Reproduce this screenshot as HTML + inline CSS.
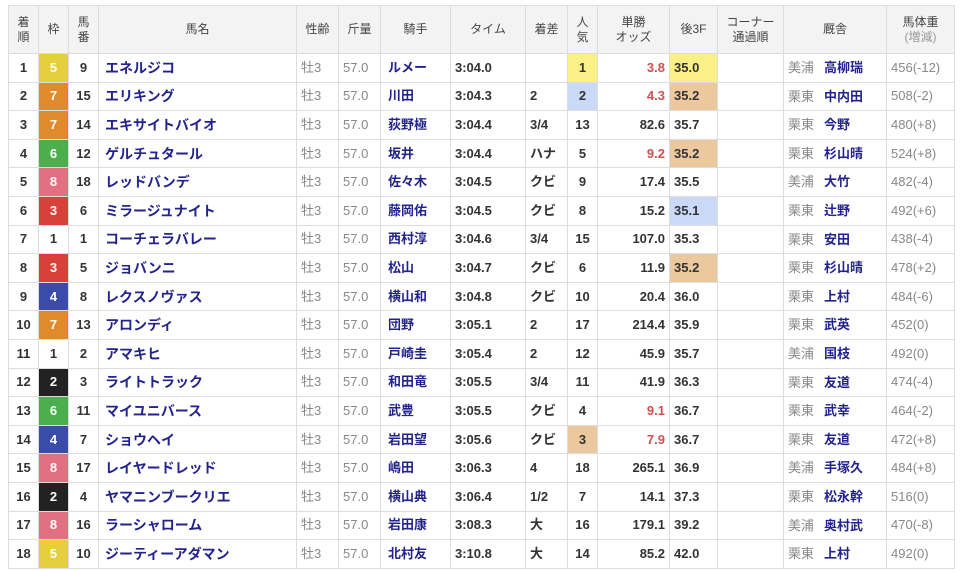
<!DOCTYPE html>
<html><head><meta charset="utf-8"><style>
body{margin:0;background:#fff;font-family:"Liberation Sans","Noto Sans CJK JP",sans-serif;}
table{position:absolute;left:8px;top:5px;border-collapse:collapse;table-layout:fixed;width:946px;font-size:13px;color:#333;}
td,th{border:1px solid #ddd;padding:0 4px;white-space:nowrap;overflow:hidden;vertical-align:middle;line-height:16px;}
th{background:#f3f3f3;font-weight:normal;font-size:12px;color:#444;height:47px;line-height:15px;text-align:center}
td{height:27.6px;}
td span{display:inline-block;vertical-align:middle;line-height:16px}
.c{text-align:center}.b{font-weight:bold}.r{text-align:right}
.n{color:#23238e;font-weight:bold;font-size:14px;padding-left:6px}
.j{color:#23238e;font-weight:bold;padding-left:7px}
.g{color:#888}
.o{color:#d05050}
.w{color:#fff;font-weight:bold;text-align:center}
.w1{background:#fff;color:#333}.w2{background:#222}.w3{background:#d8403a}.w4{background:#3b4ca8}.w5{background:#e5cf3c}.w6{background:#4cae4c}.w7{background:#e08a2b}.w8{background:#e07082}
.p1{background:#fbef88}.p2{background:#c9d9f7}.p3{background:#ecc89e}
th .s{color:#999;font-size:12px}
.k{color:#23238e;font-weight:bold;margin-left:10px}
</style></head><body>
<table>
<colgroup><col style="width:30px"><col style="width:30px"><col style="width:30px"><col style="width:198px"><col style="width:42px"><col style="width:42px"><col style="width:70px"><col style="width:75px"><col style="width:42px"><col style="width:30px"><col style="width:72px"><col style="width:48px"><col style="width:66px"><col style="width:103px"><col style="width:68px"></colgroup>
<tr><th>着<br>順</th><th>枠</th><th>馬<br>番</th><th>馬名</th><th>性齢</th><th>斤量</th><th>騎手</th><th>タイム</th><th>着差</th><th>人<br>気</th><th>単勝<br>オッズ</th><th>後3F</th><th>コーナー<br>通過順</th><th>厩舎</th><th>馬体重<br><span class="s">(増減)</span></th></tr>
<tr><td class="c b">1</td><td class="w w5">5</td><td class="c b">9</td><td class="n">エネルジコ</td><td class="g">牡3</td><td class="g">57.0</td><td class="j">ルメー</td><td class="b">3:04.0</td><td class="b"></td><td class="c b p1">1</td><td class="r b o">3.8</td><td class="b p1">35.0</td><td></td><td><span class="g">美浦</span><span class="k">高柳瑞</span></td><td class="g">456(-12)</td></tr>
<tr><td class="c b">2</td><td class="w w7">7</td><td class="c b">15</td><td class="n">エリキング</td><td class="g">牡3</td><td class="g">57.0</td><td class="j">川田</td><td class="b">3:04.3</td><td class="b">2</td><td class="c b p2">2</td><td class="r b o">4.3</td><td class="b p3">35.2</td><td></td><td><span class="g">栗東</span><span class="k">中内田</span></td><td class="g">508(-2)</td></tr>
<tr><td class="c b">3</td><td class="w w7">7</td><td class="c b">14</td><td class="n">エキサイトバイオ</td><td class="g">牡3</td><td class="g">57.0</td><td class="j">荻野極</td><td class="b">3:04.4</td><td class="b">3/4</td><td class="c b">13</td><td class="r b">82.6</td><td class="b">35.7</td><td></td><td><span class="g">栗東</span><span class="k">今野</span></td><td class="g">480(+8)</td></tr>
<tr><td class="c b">4</td><td class="w w6">6</td><td class="c b">12</td><td class="n">ゲルチュタール</td><td class="g">牡3</td><td class="g">57.0</td><td class="j">坂井</td><td class="b">3:04.4</td><td class="b">ハナ</td><td class="c b">5</td><td class="r b o">9.2</td><td class="b p3">35.2</td><td></td><td><span class="g">栗東</span><span class="k">杉山晴</span></td><td class="g">524(+8)</td></tr>
<tr><td class="c b">5</td><td class="w w8">8</td><td class="c b">18</td><td class="n">レッドバンデ</td><td class="g">牡3</td><td class="g">57.0</td><td class="j">佐々木</td><td class="b">3:04.5</td><td class="b">クビ</td><td class="c b">9</td><td class="r b">17.4</td><td class="b">35.5</td><td></td><td><span class="g">美浦</span><span class="k">大竹</span></td><td class="g">482(-4)</td></tr>
<tr><td class="c b">6</td><td class="w w3">3</td><td class="c b">6</td><td class="n">ミラージュナイト</td><td class="g">牡3</td><td class="g">57.0</td><td class="j">藤岡佑</td><td class="b">3:04.5</td><td class="b">クビ</td><td class="c b">8</td><td class="r b">15.2</td><td class="b p2">35.1</td><td></td><td><span class="g">栗東</span><span class="k">辻野</span></td><td class="g">492(+6)</td></tr>
<tr><td class="c b">7</td><td class="w w1">1</td><td class="c b">1</td><td class="n">コーチェラバレー</td><td class="g">牡3</td><td class="g">57.0</td><td class="j">西村淳</td><td class="b">3:04.6</td><td class="b">3/4</td><td class="c b">15</td><td class="r b">107.0</td><td class="b">35.3</td><td></td><td><span class="g">栗東</span><span class="k">安田</span></td><td class="g">438(-4)</td></tr>
<tr><td class="c b">8</td><td class="w w3">3</td><td class="c b">5</td><td class="n">ジョバンニ</td><td class="g">牡3</td><td class="g">57.0</td><td class="j">松山</td><td class="b">3:04.7</td><td class="b">クビ</td><td class="c b">6</td><td class="r b">11.9</td><td class="b p3">35.2</td><td></td><td><span class="g">栗東</span><span class="k">杉山晴</span></td><td class="g">478(+2)</td></tr>
<tr><td class="c b">9</td><td class="w w4">4</td><td class="c b">8</td><td class="n">レクスノヴァス</td><td class="g">牡3</td><td class="g">57.0</td><td class="j">横山和</td><td class="b">3:04.8</td><td class="b">クビ</td><td class="c b">10</td><td class="r b">20.4</td><td class="b">36.0</td><td></td><td><span class="g">栗東</span><span class="k">上村</span></td><td class="g">484(-6)</td></tr>
<tr><td class="c b">10</td><td class="w w7">7</td><td class="c b">13</td><td class="n">アロンディ</td><td class="g">牡3</td><td class="g">57.0</td><td class="j">団野</td><td class="b">3:05.1</td><td class="b">2</td><td class="c b">17</td><td class="r b">214.4</td><td class="b">35.9</td><td></td><td><span class="g">栗東</span><span class="k">武英</span></td><td class="g">452(0)</td></tr>
<tr><td class="c b">11</td><td class="w w1">1</td><td class="c b">2</td><td class="n">アマキヒ</td><td class="g">牡3</td><td class="g">57.0</td><td class="j">戸崎圭</td><td class="b">3:05.4</td><td class="b">2</td><td class="c b">12</td><td class="r b">45.9</td><td class="b">35.7</td><td></td><td><span class="g">美浦</span><span class="k">国枝</span></td><td class="g">492(0)</td></tr>
<tr><td class="c b">12</td><td class="w w2">2</td><td class="c b">3</td><td class="n">ライトトラック</td><td class="g">牡3</td><td class="g">57.0</td><td class="j">和田竜</td><td class="b">3:05.5</td><td class="b">3/4</td><td class="c b">11</td><td class="r b">41.9</td><td class="b">36.3</td><td></td><td><span class="g">栗東</span><span class="k">友道</span></td><td class="g">474(-4)</td></tr>
<tr><td class="c b">13</td><td class="w w6">6</td><td class="c b">11</td><td class="n">マイユニバース</td><td class="g">牡3</td><td class="g">57.0</td><td class="j">武豊</td><td class="b">3:05.5</td><td class="b">クビ</td><td class="c b">4</td><td class="r b o">9.1</td><td class="b">36.7</td><td></td><td><span class="g">栗東</span><span class="k">武幸</span></td><td class="g">464(-2)</td></tr>
<tr><td class="c b">14</td><td class="w w4">4</td><td class="c b">7</td><td class="n">ショウヘイ</td><td class="g">牡3</td><td class="g">57.0</td><td class="j">岩田望</td><td class="b">3:05.6</td><td class="b">クビ</td><td class="c b p3">3</td><td class="r b o">7.9</td><td class="b">36.7</td><td></td><td><span class="g">栗東</span><span class="k">友道</span></td><td class="g">472(+8)</td></tr>
<tr><td class="c b">15</td><td class="w w8">8</td><td class="c b">17</td><td class="n">レイヤードレッド</td><td class="g">牡3</td><td class="g">57.0</td><td class="j">嶋田</td><td class="b">3:06.3</td><td class="b">4</td><td class="c b">18</td><td class="r b">265.1</td><td class="b">36.9</td><td></td><td><span class="g">美浦</span><span class="k">手塚久</span></td><td class="g">484(+8)</td></tr>
<tr><td class="c b">16</td><td class="w w2">2</td><td class="c b">4</td><td class="n">ヤマニンブークリエ</td><td class="g">牡3</td><td class="g">57.0</td><td class="j">横山典</td><td class="b">3:06.4</td><td class="b">1/2</td><td class="c b">7</td><td class="r b">14.1</td><td class="b">37.3</td><td></td><td><span class="g">栗東</span><span class="k">松永幹</span></td><td class="g">516(0)</td></tr>
<tr><td class="c b">17</td><td class="w w8">8</td><td class="c b">16</td><td class="n">ラーシャローム</td><td class="g">牡3</td><td class="g">57.0</td><td class="j">岩田康</td><td class="b">3:08.3</td><td class="b">大</td><td class="c b">16</td><td class="r b">179.1</td><td class="b">39.2</td><td></td><td><span class="g">美浦</span><span class="k">奥村武</span></td><td class="g">470(-8)</td></tr>
<tr><td class="c b">18</td><td class="w w5">5</td><td class="c b">10</td><td class="n">ジーティーアダマン</td><td class="g">牡3</td><td class="g">57.0</td><td class="j">北村友</td><td class="b">3:10.8</td><td class="b">大</td><td class="c b">14</td><td class="r b">85.2</td><td class="b">42.0</td><td></td><td><span class="g">栗東</span><span class="k">上村</span></td><td class="g">492(0)</td></tr>
</table>
</body></html>
